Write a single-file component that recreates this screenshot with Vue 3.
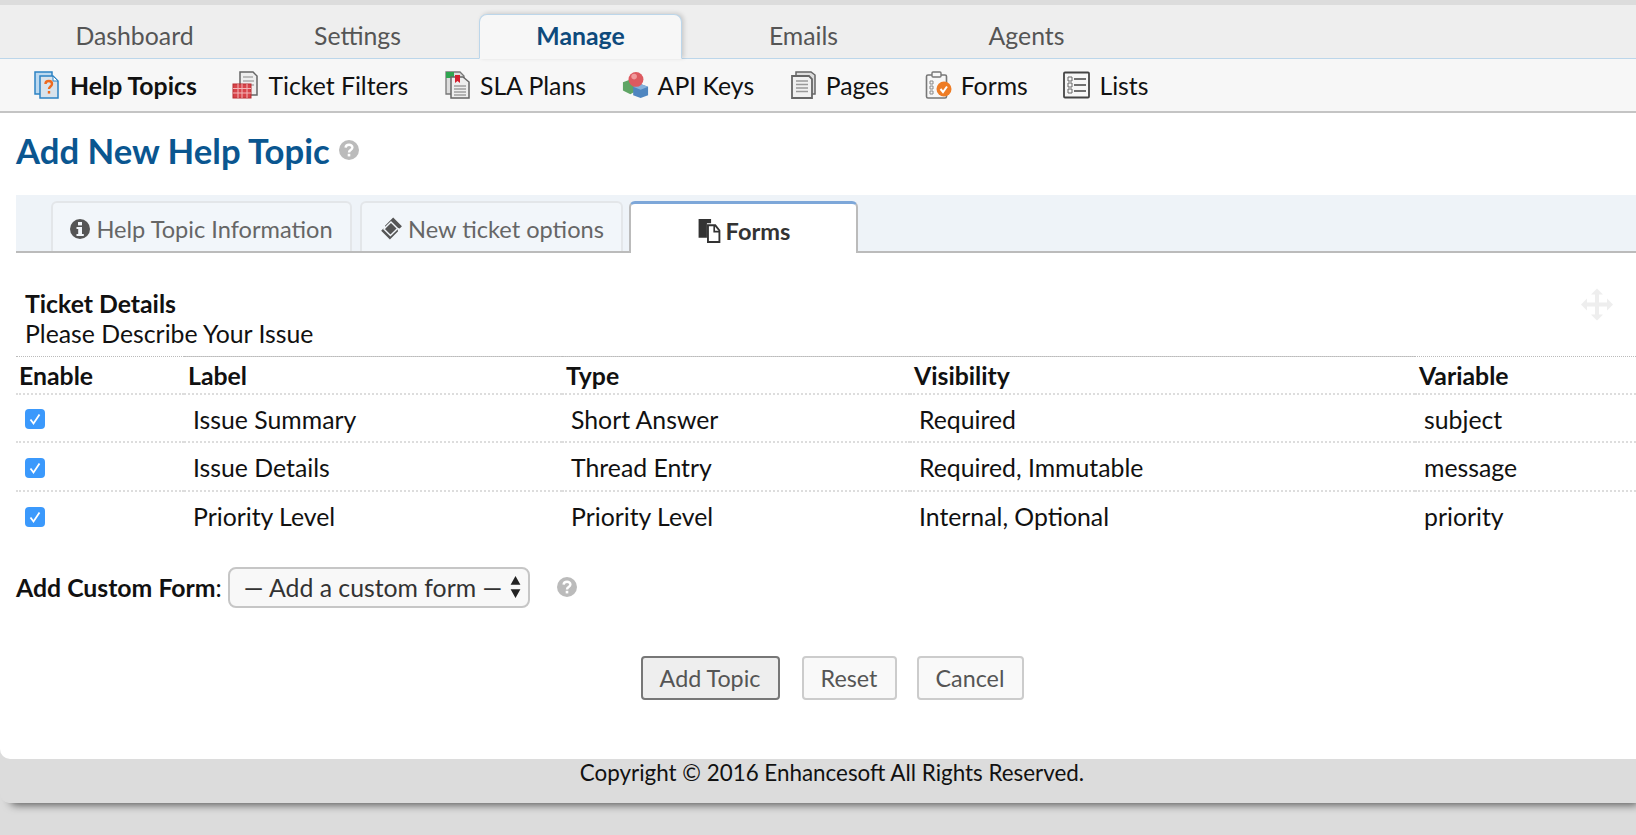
<template>
  <div class="page">
    <div class="sheet">
      <nav class="main-nav">
        <a v-for="t in mainTabs" :key="t" class="main-tab" :class="{ active: t === 'Manage' }">{{ t }}</a>
      </nav>

      <div class="sub-nav">
        <a class="sub-item strong">
          <svg class="sub-icon" viewBox="0 0 27 28">
            <rect x="1" y="1" width="17" height="22" fill="#bcd9f0" stroke="#2d83c4" stroke-width="1.5" />
            <path d="M6 5h13l5 5v17H6z" fill="#d9e3ec" stroke="#2d83c4" stroke-width="1.5" />
            <path d="M19 5v5h5z" fill="#fff" stroke="#2d83c4" />
            <path d="M11.5 13c0-4 6.500-4 6.500 0 0 2.500-3 2.500-3 5" fill="none" stroke="#ee6a1f" stroke-width="2.400" />
            <rect x="13.800" y="20" width="2.400" height="2.600" fill="#ee6a1f" />
          </svg>
          Help Topics
        </a>
        <a class="sub-item">
          <svg class="sub-icon" viewBox="0 0 27 28">
            <path d="M8 1h13l4 4v19H8z" fill="#eee" stroke="#666" stroke-width="1.500" />
            <path d="M11 6h10M11 10h11M11 14h11" stroke="#888" stroke-width="1.200" />
            <rect x="1" y="13" width="18" height="14" fill="#d8444a" stroke="#b72c30" />
            <path d="M1 17.500h18M1 22h18M6 13v14M10 13v14M15 13v14" stroke="#f3b6b8" />
          </svg>
          Ticket Filters
        </a>
        <a class="sub-item">
          <svg class="sub-icon" viewBox="0 0 27 28">
            <path d="M2 1h14l4 4v18H2z" fill="#ddd" stroke="#777" stroke-width="1.300" />
            <rect x="2" y="1" width="8" height="6" fill="#2fa550" />
            <path d="M7 6h12l6 5v16H7z" fill="#eee" stroke="#666" stroke-width="1.500" />
            <path d="M11 4h5v8l-2.500-2-2.500 2z" fill="#d3202f" />
            <path d="M10 15h12M10 18h12M10 21h12M10 24h12" stroke="#777" stroke-width="1.200" />
          </svg>
          SLA Plans
        </a>
        <a class="sub-item">
          <svg class="sub-icon" viewBox="0 0 29 28">
            <path d="M1 11l8-3 7 3v9l-7 4-8-4z" fill="#5fa565" />
            <path d="M12 16l8-3 8 3v9l-8 3-8-3z" fill="#4f86c0" />
            <path d="M12 16l8 3 8-3-8-3z" fill="#85b1dc" />
            <circle cx="15" cy="8" r="8" fill="#dd5a60" />
            <circle cx="13" cy="5" r="3" fill="#f09a9c" />
          </svg>
          API Keys
        </a>
        <a class="sub-item">
          <svg class="sub-icon" viewBox="0 0 27 28">
            <path d="M6 1h15l4 3v19H6z" fill="#ddd" stroke="#666" stroke-width="1.500" />
            <path d="M2 5h17l3 3v19H2z" fill="#f0f0f0" stroke="#666" stroke-width="1.800" />
            <path d="M6 10h12M6 13.500h12M6 17h12M6 20.500h12" stroke="#999" stroke-width="1.500" />
          </svg>
          Pages
        </a>
        <a class="sub-item">
          <svg class="sub-icon" viewBox="0 0 27 28">
            <rect x="1.500" y="4" width="20" height="23" rx="1.500" fill="#f7f7f7" stroke="#777" stroke-width="1.600" />
            <rect x="7" y="1" width="9" height="5" rx="1" fill="#f7f7f7" stroke="#777" stroke-width="1.400" />
            <path d="M5 10h3v3H5zM5 15h3v3H5zM5 20h3v3H5z" fill="none" stroke="#888" />
            <circle cx="19" cy="18" r="7.500" fill="#ee7c25" />
            <path d="M15.500 18l2.500 3 4-5.500" fill="none" stroke="#fff" stroke-width="2" />
          </svg>
          Forms
        </a>
        <a class="sub-item">
          <svg class="sub-icon" viewBox="0 0 27 28">
            <rect x="1" y="1.500" width="25" height="25" rx="1" fill="#f7f7f7" stroke="#444" stroke-width="1.800" />
            <path d="M5 6h4v4H5zM5 12h4v4H5zM5 18h4v4H5z" fill="none" stroke="#666" />
            <path d="M11 8h12M11 14h12M11 20h12" stroke="#444" stroke-width="1.600" />
          </svg>
          Lists
        </a>
      </div>

      <main class="content">
        <h1 class="title">
          Add New Help Topic
          <svg class="help" viewBox="0 0 20 20">
            <circle cx="10" cy="10" r="10" fill="#bbb" />
            <path d="M6.600 7.600C6.800 3.800 13.400 3.800 13.400 7.600c0 2.600-3.400 2.400-3.400 4.800" fill="none" stroke="#fff" stroke-width="2.400" />
            <rect x="8.700" y="13.800" width="2.600" height="2.600" fill="#fff" />
          </svg>
        </h1>

        <div class="tabs">
          <a class="tab info">
            <svg class="tab-icon" viewBox="0 0 20 20">
              <circle cx="10" cy="10" r="10" fill="#555" />
              <rect x="8" y="3" width="4" height="3.400" fill="#f2f6fa" />
              <path d="M6.500 8h5.500v7h1.800v2H6.500v-2h1.700v-5H6.500z" fill="#f2f6fa" />
            </svg>
            Help Topic Information
          </a>
          <a class="tab options">
            <svg class="tab-icon wide" viewBox="0 0 22 22">
              <path d="M13 1l8 8-2 2-1.500-.5L17 12l.5 1.500L10 21l-8-8 2-2 1.500.5L6 10l-.5-1.500z" fill="#555" />
              <path d="M11 5l6 6-6.500 6.500-6-6z" fill="none" stroke="#f2f6fa" stroke-width="1.300" />
            </svg>
            New ticket options
          </a>
          <a class="tab active">
            <svg class="tab-icon wide" viewBox="0 0 22 24">
              <path d="M1 1h12v4H9v14H1z" fill="#333" />
              <path d="M10 7h7l4 5v11H10z" fill="#fff" stroke="#333" stroke-width="1.800" />
              <path d="M16 7v6h5" fill="none" stroke="#333" stroke-width="1.600" />
            </svg>
            Forms
          </a>
        </div>

        <section class="form-section">
          <svg class="move" viewBox="0 0 32 32">
            <path d="M16 0l6 6h-4v8h8v-4l6 6-6 6v-4h-8v8h4l-6 6-6-6h4v-8H6v4l-6-6 6-6v4h8V6h-4z" fill="#eee" />
          </svg>
          <div class="section-title">Ticket Details</div>
          <div class="section-desc">Please Describe Your Issue</div>

          <table class="fields">
            <colgroup>
              <col style="width: 168px" />
              <col style="width: 378px" />
              <col style="width: 348px" />
              <col style="width: 505px" />
              <col />
            </colgroup>
            <thead>
              <tr>
                <th>Enable</th>
                <th>Label</th>
                <th>Type</th>
                <th>Visibility</th>
                <th>Variable</th>
              </tr>
            </thead>
            <tbody>
              <tr v-for="f in fields" :key="f.variable">
                <td>
                  <span class="check">
                    <svg viewBox="0 0 20 20"><path d="M5.500 10.500l3 4 6-9" fill="none" stroke="#fff" stroke-width="1.800" /></svg>
                  </span>
                </td>
                <td>{{ f.label }}</td>
                <td>{{ f.type }}</td>
                <td>{{ f.visibility }}</td>
                <td>{{ f.variable }}</td>
              </tr>
            </tbody>
          </table>

          <div class="custom-form">
            <span class="custom-label"><b>Add Custom Form</b>:</span>
            <div class="select">
              <span>— Add a custom form —</span>
              <svg class="select-arrows" viewBox="0 0 10 22">
                <path d="M5 1l4.500 8h-9zM5 21l4.500-8h-9z" fill="#222" />
              </svg>
            </div>
            <svg class="help small" viewBox="0 0 20 20">
              <circle cx="10" cy="10" r="10" fill="#bbb" />
              <path d="M6.600 7.600C6.800 3.800 13.400 3.800 13.400 7.600c0 2.600-3.400 2.400-3.400 4.800" fill="none" stroke="#fff" stroke-width="2.400" />
              <rect x="8.700" y="13.800" width="2.600" height="2.600" fill="#fff" />
            </svg>
          </div>
        </section>

        <div class="actions">
          <button class="btn primary">Add Topic</button>
          <button class="btn reset">Reset</button>
          <button class="btn cancel">Cancel</button>
        </div>
      </main>

      <footer class="footer">Copyright © 2016 Enhancesoft All Rights Reserved.</footer>
    </div>
  </div>
</template>

<script setup>
const mainTabs = ['Dashboard', 'Settings', 'Manage', 'Emails', 'Agents']

const fields = [
  { label: 'Issue Summary', type: 'Short Answer', visibility: 'Required', variable: 'subject' },
  { label: 'Issue Details', type: 'Thread Entry', visibility: 'Required, Immutable', variable: 'message' },
  { label: 'Priority Level', type: 'Priority Level', visibility: 'Internal, Optional', variable: 'priority' }
]
</script>

<style>
html,
body {
  margin: 0;
  background: #dcdcdc;
  overflow: hidden;
}
</style>

<style scoped>
.page {
  height: 835px;
  padding-top: 5px;
  box-sizing: border-box;
  font-family: Lato, "Liberation Sans", sans-serif;
  font-size: 24.8px;
  color: #111;
}

.sheet {
  background: #dcdcdc;
  border-radius: 0 0 0 10px;
  box-shadow: 6px 6px 8px -4px rgba(0, 0, 0, 0.6);
}

.main-nav {
  display: flex;
  align-items: flex-end;
  height: 53px;
  padding-left: 33px;
  background: #eee;
  border-bottom: 1px solid #bcd6ea;
}

.main-tab {
  width: 203px;
  height: 45px;
  margin-right: 20px;
  box-sizing: border-box;
  padding-top: 8px;
  text-align: center;
  color: #555;
}

.main-tab.active {
  height: 45px;
  margin-bottom: -1px;
  padding-top: 6px;
  background: #f7f7f7;
  border: 1px solid #bcd6ea;
  border-bottom: 1px solid #f7f7f7;
  border-radius: 8px 8px 0 0;
  box-shadow: 2px -1px 4px rgba(0, 0, 0, 0.15);
  color: #0e4a7c;
  font-weight: 700;
}

.sub-nav {
  display: flex;
  align-items: center;
  gap: 35.6px;
  height: 52px;
  padding-left: 34px;
  background: #f7f7f7;
  border-bottom: 2px solid #c4c4c4;
}

.sub-item {
  display: flex;
  align-items: center;
  gap: 9px;
}

.sub-item.strong {
  font-weight: 700;
}

.sub-icon {
  width: 27px;
  height: 28px;
}

.content {
  padding: 0 0 0 16px;
  background: #fff;
  border-radius: 0 0 0 10px;
}

.title {
  display: flex;
  align-items: center;
  gap: 9px;
  height: 82px;
  padding-bottom: 8px;
  box-sizing: border-box;
  margin: 0;
  font-size: 34.7px;
  font-weight: 700;
  color: #0a5690;
}

.help {
  width: 20px;
  height: 20px;
}

.tabs {
  display: flex;
  align-items: flex-end;
  gap: 8px;
  height: 58px;
  padding-left: 35px;
  background: #eef3f8;
  border-bottom: 2px solid #bbb;
  box-sizing: border-box;
  font-size: 23.6px;
}

.tab {
  display: flex;
  align-items: center;
  justify-content: center;
  gap: 6px;
  height: 50px;
  padding-top: 3px;
  box-sizing: border-box;
  background: #f2f6fa;
  border: 2px solid #e3e6e9;
  border-bottom: 0;
  border-radius: 6px 6px 0 0;
  color: #666;
}

.tab.info {
  width: 301px;
}

.tab.options {
  width: 263px;
}

.tab.active {
  width: 229px;
  margin-left: -2px;
  margin-bottom: -2px;
  height: 52px;
  padding-top: 4px;
  background: #fff;
  border: 2px solid #bbb;
  border-top: 3px solid #7da7d9;
  border-bottom: 0;
  color: #333;
  font-weight: 700;
}

.tab-icon {
  width: 20px;
  height: 20px;
}

.tab-icon.wide {
  width: 24px;
  height: 25px;
  margin-right: -1px;
}

.form-section {
  position: relative;
  padding-top: 36px;
}

.move {
  position: absolute;
  top: 35px;
  right: 23px;
  width: 32px;
  height: 33px;
}

.section-title {
  padding-left: 9px;
  font-weight: 700;
  line-height: 30px;
}

.section-desc {
  padding-left: 9px;
  line-height: 30px;
}

.fields {
  width: 100%;
  margin-top: 7px;
  border-collapse: collapse;
  table-layout: fixed;
  border-top: 1px dotted #bbb;
}

.fields th {
  height: 37px;
  padding: 2px 0 0 4px;
  box-sizing: border-box;
  text-align: left;
  font-weight: 700;
  border-bottom: 2px dotted #ddd;
}

.fields th:first-child {
  padding-left: 3px;
}

.fields th:nth-child(n + 2):nth-child(-n + 4) {
  box-shadow: 0 -1px 0 #ccc;
}

.fields td {
  height: 48.5px;
  padding: 3px 0 0 9px;
  box-sizing: border-box;
  border-bottom: 2px dotted #ddd;
}

.fields tbody tr:last-child td {
  border-bottom: 0;
}

.check {
  display: block;
  width: 20px;
  height: 20px;
  background: #3b99fc;
  border-radius: 4px;
}

.check svg {
  display: block;
}

.custom-form {
  display: flex;
  align-items: center;
  height: 40px;
  margin-top: 28px;
}

.custom-label {
  margin-right: 6px;
}

.select {
  display: flex;
  align-items: center;
  justify-content: space-between;
  width: 302px;
  height: 41px;
  padding: 0 6px 0 14px;
  box-sizing: border-box;
  background: #f8f8f8;
  border: 2px solid #c6c6c6;
  border-radius: 8px;
  color: #333;
}

.select-arrows {
  width: 13px;
  height: 24px;
}

.help.small {
  margin-left: 27px;
}

.actions {
  display: flex;
  justify-content: center;
  gap: 20px;
  margin: 0 0 0 12px;
  padding: 49px 0 59px;
}

.btn {
  height: 44px;
  padding: 0;
  background: #f9f9f9;
  border: 2px solid #ccc;
  border-radius: 4px;
  font-family: inherit;
  font-size: 23.3px;
  white-space: nowrap;
  color: #555;
}

.btn.primary {
  width: 139px;
  margin-right: 2px;
  background: #eee;
  border-color: #777;
}

.btn.reset {
  width: 95px;
}

.btn.cancel {
  width: 107px;
}

.footer {
  height: 44px;
  padding-left: 28px;
  background: #dcdcdc;
  border-radius: 0 0 0 10px;
  text-align: center;
  font-size: 22.4px;
  line-height: 27px;
  color: #111;
}
</style>
